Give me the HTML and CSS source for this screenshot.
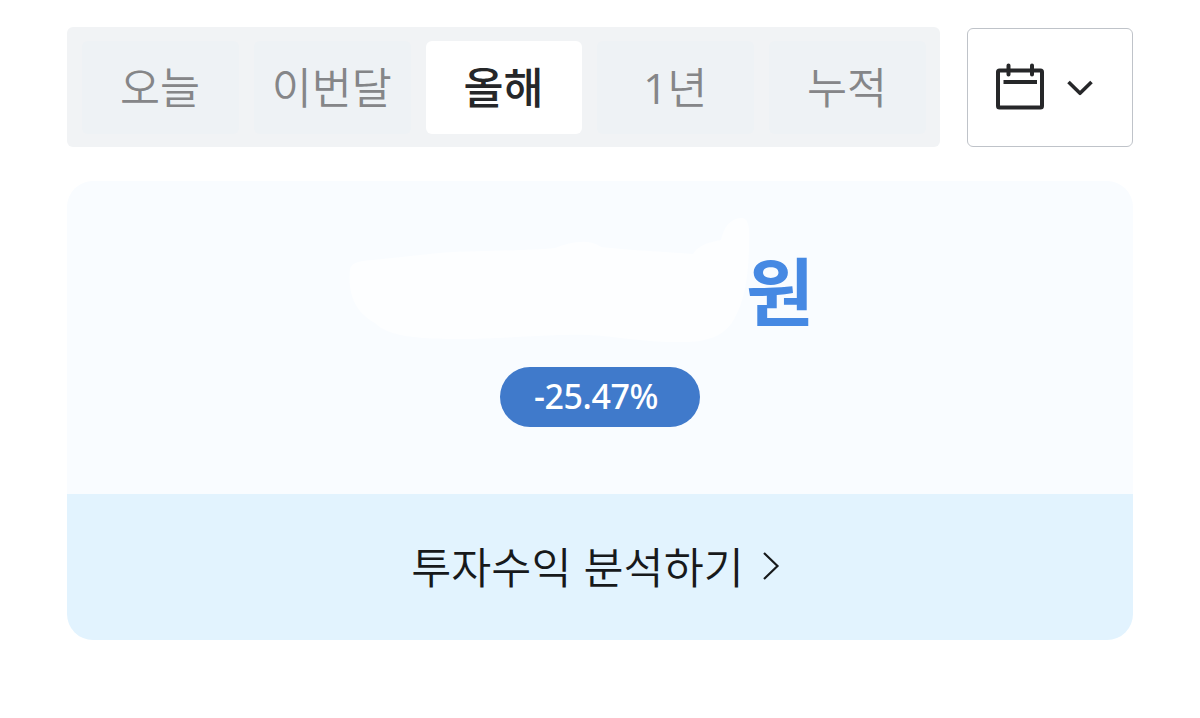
FILE: index.html
```html
<!DOCTYPE html>
<html lang="ko">
<head>
    <meta charset="UTF-8">
    <meta name="viewport" content="width=device-width, initial-scale=1.0">
    <title>투자수익</title>
    <link rel="stylesheet" href="styles.css">
</head>
<body>
    <!-- Period filter -->
    <div class="filter">
        <div class="tabs">
            <button class="tab">오늘</button>
            <button class="tab">이번달</button>
            <button class="tab active">올해</button>
            <button class="tab"><span class="num">1</span>년</button>
            <button class="tab">누적</button>
        </div>
        <button class="date-btn" aria-label="기간 선택">
            <svg class="icon-calendar" width="50" height="48" viewBox="0 0 50 48">
                <rect x="3" y="7.5" width="44" height="37" rx="1.5" fill="none" stroke="#262729" stroke-width="4"/>
                <path d="M13.5 2.6v9M37 2.6v9" stroke="#262729" stroke-width="4" stroke-linecap="round"/>
                <path d="M8.5 19h33.5" stroke="#262729" stroke-width="4"/>
            </svg>
            <svg class="icon-down" width="28" height="18" viewBox="0 0 28 18">
                <path d="M2.5 3L14 14.3L25.5 3" fill="none" stroke="#262729" stroke-width="3.6" stroke-linejoin="round"/>
            </svg>
        </button>
    </div>

    <!-- Profit card -->
    <div class="card">
        <div class="summary">
            <div class="amount">
                <svg class="amount-hidden" width="404" height="128" viewBox="0 0 404 128">
                    <path d="M3 52C6 44 14 44 26 43L92 36C140 33 180 34 208 31C224 25 242 21 254 30C290 34 324 35 346 37C352 27 364 25 374 23C378 6 386 1 396 1C404 4 402 18 402 32C401 60 398 84 386 104C376 120 358 126 330 125C300 126 270 119 240 118C200 117 160 122 110 122C70 122 40 119 28 106C12 97 0 82 3 52Z" fill="#fdfeff"/>
                </svg>
                <span class="unit">원</span>
            </div>
            <span class="rate">-25.47%</span>
        </div>
        <a class="analyze">
            <span>투자수익 분석하기</span>
            <svg width="18" height="30" viewBox="0 0 18 30">
                <path d="M2 2L15.5 15L2 28" fill="none" stroke="#17191b" stroke-width="2.2"/>
            </svg>
        </a>
    </div>
</body>
</html>
```

FILE: styles.css
```css
* {
    box-sizing: border-box;
}

body {
    margin: 0;
    padding: 27px 67px 0;
    background-color: #fff;
    font-family: "Noto Sans CJK KR", sans-serif;
}

button {
    margin: 0;
    padding: 0;
    border: none;
    font-family: inherit;
    cursor: pointer;
}

.filter {
    display: flex;
    gap: 27px;
    height: 120px;
}

.tabs {
    display: flex;
    gap: 15px;
    width: 873px;
    padding: 14px 14px 13px 15px;
    background-color: #f1f3f5;
    border-radius: 6px;
}

.tab {
    flex: 1 1 0;
    padding: 0 1px 3px 0;
    border-radius: 6px;
    background-color: #eef2f5;
    color: #858688;
    font-size: 43.5px;
    font-weight: 350;
    line-height: 1;
}

.tab .num {
    font-family: "Open Sans", sans-serif;
    font-size: 42px;
    font-weight: 400;
}

.tab.active {
    background-color: #fff;
    color: #262729;
    font-weight: 500;
}

.date-btn {
    display: flex;
    align-items: center;
    gap: 21px;
    width: 166px;
    height: 119px;
    margin-top: 1px;
    padding-left: 27px;
    border: 1px solid #bfc3c9;
    border-radius: 6px;
    background-color: #fff;
}

.icon-calendar {
    margin-bottom: 2px;
    overflow: visible;
}

.card {
    margin-top: 34px;
    border-radius: 26px;
    overflow: hidden;
}

.summary {
    display: flex;
    flex-direction: column;
    align-items: center;
    height: 313px;
    padding-top: 36px;
    background-color: #f9fcff;
}

.amount {
    display: flex;
    width: 506px;
    height: 150px;
}

.unit {
    margin: 33px 0 0 -5px;
    color: #4689e3;
    font-size: 74px;
    font-weight: 700;
    line-height: 76px;
}

.rate {
    width: 200px;
    height: 60px;
    border-radius: 30px;
    background-color: #407acb;
    color: #fff;
    font-family: "Noto Sans", sans-serif;
    font-size: 34px;
    font-weight: 500;
    letter-spacing: -0.4px;
    line-height: 59px;
    padding-left: 34px;
}

.analyze {
    display: flex;
    align-items: center;
    justify-content: center;
    gap: 18px;
    height: 146px;
    padding: 0 9px 2px 0;
    background-color: #e2f3fe;
    color: #17191b;
    font-size: 43.5px;
    font-weight: 350;
    line-height: 1;
    cursor: pointer;
}
```
